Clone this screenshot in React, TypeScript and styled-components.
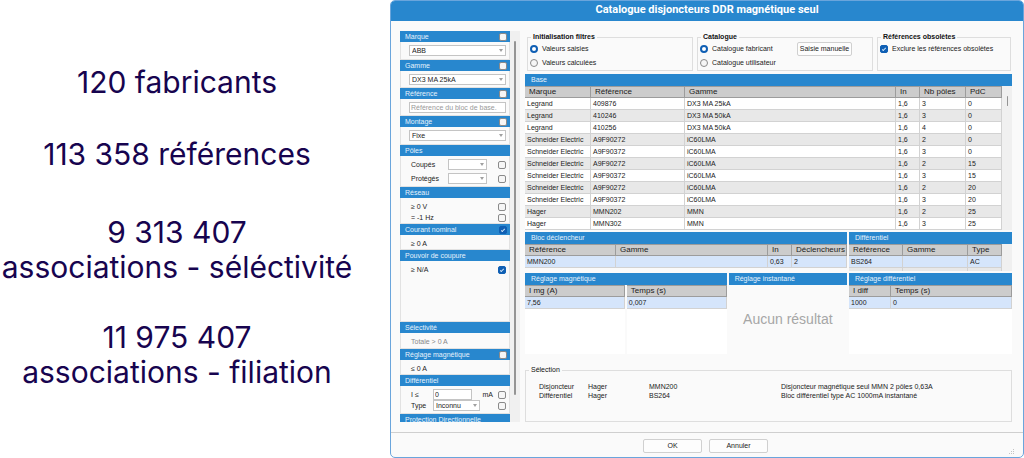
import React, { useId, useState } from "react";
import styled, { createGlobalStyle } from "styled-components";

const blue = "#2887ce";
const regular = '"Liberation Sans", Arial, sans-serif';

const GlobalStyle = createGlobalStyle`
  *, *::before, *::after { box-sizing: border-box; }
  body { margin: 0; background: #fff; }
  button, input, select { font: inherit; color: inherit; margin: 0; }
`;

const Page = styled.main`
  display: grid;
  grid-template-columns: minmax(354px, 354fr) 634fr;
  column-gap: 36px;
`;

/* ---------- figures ---------- */

const Figures = styled.section`
  display: flex;
  flex-direction: column;
  align-items: center;
  padding-top: 65px;
  color: #17044f;
  font-family: Inter, "Liberation Sans", sans-serif;
  font-size: 30px;
  line-height: 35px;
  text-align: center;
`;

const Figure = styled.p<{ $gap: number }>`
  margin: 0 0 ${(p) => p.$gap}px;
  white-space: nowrap;
`;

/* ---------- window ---------- */

const Dialog = styled.section`
  display: flex;
  flex-direction: column;
  min-width: 0;
  border: 1px solid #6aa5dc;
  border-radius: 5px;
  overflow: hidden;
  background: #fafafa;
  color: #222;
  font-family: ${regular};
  font-size: 7px;
  line-height: 10px;
`;

const TitleBar = styled.h1`
  margin: 0;
  height: 20px;
  background: ${blue};
  color: #fff;
  font: bold 11px/18px Roboto, ${regular};
  text-align: center;
`;

const Body = styled.div`
  display: grid;
  grid-template-columns: 120px 1fr;
  column-gap: 5px;
  padding: 10px 11px 10px 9px;
`;

const SidebarFrame = styled.aside`
  display: grid;
  grid-template-columns: 1fr 10px;
  height: 391px;
  overflow: hidden;
`;

const Sections = styled.div`
  overflow: hidden;
`;

const Track = styled.div`
  display: flex;
  justify-content: center;
  padding-top: 10px;
  background: #f0f0f0;
`;

const Thumb = styled.div<{ $length: number; $width: number }>`
  width: ${(p) => p.$width}px;
  height: ${(p) => p.$length}px;
  border-radius: 1px;
  background: #949494;
`;

const SectionHead = styled.header`
  display: flex;
  align-items: center;
  justify-content: space-between;
  height: 11px;
  padding: 0 3px 0 5px;
  background: ${blue};
  color: #e6f2fc;
`;

const SectionTitle = styled.h2`
  margin: 0;
  font: inherit;
`;

const SectionBody = styled.div<{ $height: number }>`
  display: flex;
  flex-direction: column;
  gap: 3px;
  height: ${(p) => p.$height}px;
  padding: 3px 3px 0 8px;
  border: solid #e2e2e2;
  border-width: 0 1px 1px;
`;

const Line = styled.div<{ $muted?: boolean }>`
  display: flex;
  align-items: center;
  min-height: 11px;
  padding-left: 2px;
  color: ${(p) => (p.$muted ? "#888" : "inherit")};
`;

const TightLines = styled.div`
  display: flex;
  flex-direction: column;
`;

const LineLabel = styled.label<{ $width: number }>`
  flex: 0 0 ${(p) => p.$width}px;
`;

const Unit = styled.span`
  margin-left: auto;
  padding-right: 5px;
`;

const PushRight = styled.span`
  display: flex;
  margin-left: auto;
`;

const Tick = styled.input`
  appearance: none;
  display: grid;
  place-items: center;
  width: 8px;
  height: 8px;
  border: 1px solid #8a8a8a;
  border-radius: 2px;
  background: #f6f6f6;
  &:checked {
    border-color: #0f5fb4;
    background: #0f5fb4;
  }
  &:checked::after {
    content: "";
    width: 4px;
    height: 2px;
    border: solid #cfe3f7;
    border-width: 0 0 1px 1px;
    transform: rotate(-45deg);
  }
`;

const Radio = styled.input`
  appearance: none;
  width: 8px;
  height: 8px;
  border: 1px solid #8a8a8a;
  border-radius: 50%;
  background: #f6f6f6;
  &:checked {
    border: 2px solid #0f5fb4;
    background: #fff;
  }
`;

const TextBox = styled.input<{ $width?: number }>`
  width: ${(p) => (p.$width ? `${p.$width}px` : "100%")};
  height: 11px;
  padding: 0 1px;
  border: 1px solid #c4c4c4;
  background: #fff;
  &::placeholder { color: #999; }
`;

const SelectFrame = styled.span<{ $width?: number }>`
  position: relative;
  display: flex;
  width: ${(p) => (p.$width ? `${p.$width}px` : "100%")};
`;

const SelectBox = styled.select`
  appearance: none;
  width: 100%;
  height: 11px;
  padding: 0 2px;
  border: 1px solid #c4c4c4;
  border-radius: 0;
  background: #fff;
`;

const Arrow = styled.svg`
  position: absolute;
  right: 3px;
  top: 4px;
  width: 4px;
  height: 3px;
  fill: #a0a0a0;
  pointer-events: none;
`;

function Select({ label, value, width, id }: { label: string; value: string; width?: number; id?: string }) {
  return (
    <SelectFrame $width={width}>
      <SelectBox id={id} aria-label={label} defaultValue={value}>
        <option value={value}>{value}</option>
      </SelectBox>
      <Arrow viewBox="0 0 4 3"><path d="M0 0h4L2 3z" /></Arrow>
    </SelectFrame>
  );
}

interface SectionProps {
  title: string;
  height: number;
  tick?: "on" | "off";
  children?: React.ReactNode;
}

function Section({ title, height, tick, children }: SectionProps) {
  return (
    <section>
      <SectionHead>
        <SectionTitle>{title}</SectionTitle>
        {tick && <Tick type="checkbox" aria-label={title} defaultChecked={tick === "on"} />}
      </SectionHead>
      <SectionBody $height={height}>{children}</SectionBody>
    </section>
  );
}

function Sidebar() {
  const id = useId();
  return (
    <SidebarFrame>
      <Sections>
        <Section title="Marque" height={18} tick="off"><Select label="Marque" value="ABB" /></Section>
        <Section title="Gamme" height={17} tick="off"><Select label="Gamme" value="DX3 MA 25kA" /></Section>
        <Section title="Référence" height={17} tick="off">
          <TextBox aria-label="Référence" placeholder="Référence du bloc de base." />
        </Section>
        <Section title="Montage" height={18} tick="off"><Select label="Montage" value="Fixe" /></Section>
        <Section title="Pôles" height={31}>
          {["Coupés", "Protégés"].map((name) => (
            <Line key={name}>
              <LineLabel $width={37} htmlFor={id + name}>{name}</LineLabel>
              <Select id={id + name} label={name} value="" width={39} />
              <PushRight><Tick type="checkbox" aria-label={"Filtrer " + name} /></PushRight>
            </Line>
          ))}
        </Section>
        <Section title="Réseau" height={26}>
          <TightLines>
            {["≥ 0 V", "= -1 Hz"].map((name) => (
              <Line as="label" key={name}>
                {name}
                <PushRight><Tick type="checkbox" /></PushRight>
              </Line>
            ))}
          </TightLines>
        </Section>
        <Section title="Courant nominal" height={15} tick="on"><Line>≥ 0 A</Line></Section>
        <Section title="Pouvoir de coupure" height={61}>
          <Line as="label">
            ≥ N/A
            <PushRight><Tick type="checkbox" defaultChecked /></PushRight>
          </Line>
        </Section>
        <Section title="Sélectivité" height={16}><Line $muted>Totale &gt; 0 A</Line></Section>
        <Section title="Réglage magnétique" height={15} tick="off"><Line>≤ 0 A</Line></Section>
        <Section title="Différentiel" height={28}>
          <TightLines>
            <Line>
              <LineLabel $width={22} htmlFor={id + "i"}>I ≤</LineLabel>
              <TextBox id={id + "i"} defaultValue="0" $width={39} />
              <Unit>mA</Unit>
              <Tick type="checkbox" aria-label="Filtrer I" />
            </Line>
            <Line>
              <LineLabel $width={22} htmlFor={id + "t"}>Type</LineLabel>
              <Select id={id + "t"} label="Type" value="Inconnu" width={47} />
              <PushRight><Tick type="checkbox" aria-label="Filtrer Type" /></PushRight>
            </Line>
          </TightLines>
        </Section>
        <Section title="Protection Directionnelle" height={15} />
      </Sections>
      <Track><Thumb $width={2} $length={354} /></Track>
    </SidebarFrame>
  );
}

/* ---------- options ---------- */

const Content = styled.div`
  display: flex;
  flex-direction: column;
  min-width: 0;
`;

const Options = styled.div`
  display: grid;
  grid-template-columns: 166fr 176fr 134fr;
  column-gap: 4px;
  height: 43px;
  padding: 1px 1px 3px 2px;
`;

const Group = styled.fieldset`
  display: flex;
  min-width: 0;
  margin: 0;
  padding: 0 20px 0 2px;
  border: 1px solid #dedede;
`;

const Legend = styled.legend<{ $bold?: boolean }>`
  margin-left: 1px;
  padding: 0 2px;
  color: #111;
  font-weight: ${(p) => (p.$bold ? "bold" : "normal")};
`;

const Choices = styled.div`
  display: flex;
  flex: 1;
  flex-direction: column;
  gap: 4px;
  padding-top: 2px;
`;

const Choice = styled.label`
  display: flex;
  align-items: center;
  gap: 4px;
  white-space: nowrap;
`;

const Button = styled.button<{ $width: number }>`
  flex: none;
  width: ${(p) => p.$width}px;
  height: 14px;
  padding: 0;
  border: 1px solid #d0d0d0;
  border-radius: 2px;
  background: #fdfdfd;
  line-height: 12px;
  white-space: nowrap;
`;

function RadioGroup({ name, options }: { name: string; options: string[] }) {
  const [picked, setPicked] = useState(options[0]);
  return (
    <Choices>
      {options.map((option) => (
        <Choice key={option}>
          <Radio type="radio" name={name} checked={picked === option} onChange={() => setPicked(option)} />
          {option}
        </Choice>
      ))}
    </Choices>
  );
}

/* ---------- tables ---------- */

const PanelTitle = styled.h2`
  margin: 0;
  height: 12px;
  padding-left: 6px;
  background: ${blue};
  color: #e6f2fc;
  font: inherit;
  line-height: 12px;
`;

const Scrollable = styled.div<{ $height: number }>`
  display: grid;
  grid-template-columns: 1fr 10px;
  height: ${(p) => p.$height}px;
  overflow: hidden;
`;

const Table = styled.table`
  width: 100%;
  table-layout: fixed;
  border-collapse: separate;
  border-spacing: 0;
  align-self: start;
`;

const HeadCell = styled.th`
  height: 12px;
  padding: 0 0 0 4px;
  border: solid #9c9c9c;
  border-width: 1px 1px 1px 0;
  background: #ccc;
  font-size: 8px;
  font-weight: normal;
  line-height: 10px;
  text-align: left;
  white-space: nowrap;
`;

const Row = styled.tr<{ $tone: "plain" | "alt" | "selected" }>`
  background: ${(p) => ({ plain: "#fff", alt: "#e8e8e8", selected: "#d5e5fb" })[p.$tone]};
`;

const Cell = styled.td`
  height: 12px;
  padding: 1px 0 0 2px;
  border: solid #d2d2d2;
  border-width: 0 1px 1px 0;
  white-space: nowrap;
`;

interface GridProps {
  columns: [string, number?][];
  rows: string[][];
  selected?: boolean;
}

function Grid({ columns, rows, selected }: GridProps) {
  return (
    <Table>
      <colgroup>
        {columns.map(([name, width]) => <col key={name} width={width} />)}
      </colgroup>
      <thead>
        <tr>{columns.map(([name]) => <HeadCell key={name} scope="col">{name}</HeadCell>)}</tr>
      </thead>
      <tbody>
        {rows.map((row, r) => (
          <Row key={r} $tone={selected && r === 0 ? "selected" : r % 2 ? "alt" : "plain"}>
            {row.map((text, c) => <Cell key={c}>{text}</Cell>)}
          </Row>
        ))}
      </tbody>
    </Table>
  );
}

const PanelRow = styled.div`
  display: grid;
  grid-template-columns: 322fr 163px;
  column-gap: 2px;
  margin-top: 2px;
`;

const SettingRow = styled.div`
  display: grid;
  grid-template-columns: 201fr 118fr 163px;
  column-gap: 2px;
  margin-top: 2px;
`;

const SplitArea = styled.div<{ $columns: number }>`
  display: grid;
  grid-template-columns: repeat(${(p) => p.$columns}, 1fr);
  column-gap: 2px;
  height: 69px;
`;

const Sheet = styled.div`
  background: #fff;
`;

const Empty = styled.p`
  margin: 0;
  height: 69px;
  color: #a6a6a6;
  font: 14px/69px ${regular};
  text-align: center;
  white-space: nowrap;
`;

const baseRows = [
  ["Legrand", "409876", "DX3 MA 25kA", "1,6", "3", "0"],
  ["Legrand", "410246", "DX3 MA 50kA", "1,6", "3", "0"],
  ["Legrand", "410256", "DX3 MA 50kA", "1,6", "4", "0"],
  ["Schneider Electric", "A9F90272", "iC60LMA", "1,6", "2", "0"],
  ["Schneider Electric", "A9F90372", "iC60LMA", "1,6", "3", "0"],
  ["Schneider Electric", "A9F90272", "iC60LMA", "1,6", "2", "15"],
  ["Schneider Electric", "A9F90372", "iC60LMA", "1,6", "3", "15"],
  ["Schneider Electric", "A9F90272", "iC60LMA", "1,6", "2", "20"],
  ["Schneider Electric", "A9F90372", "iC60LMA", "1,6", "3", "20"],
  ["Hager", "MMN202", "MMN", "1,6", "2", "25"],
  ["Hager", "MMN302", "MMN", "1,6", "3", "25"],
];

/* ---------- selection and footer ---------- */

const Summary = styled.fieldset`
  height: 57px;
  margin: 11px 0 0;
  padding: 7px 0 0 13px;
  border: 1px solid #dedede;
`;

const SummaryLegend = styled(Legend)`
  margin-left: -10px;
`;

const SummaryLine = styled.div`
  display: grid;
  grid-template-columns: 49px 61px 132px 1fr;
  line-height: 9px;
`;

const Footer = styled.footer`
  display: grid;
  grid-template-columns: 1fr auto 1fr;
  align-items: start;
  height: 25px;
  padding: 6px 8px 0 5px;
  border-top: 1px solid #cfcfcf;
`;

const Buttons = styled.div`
  grid-column: 2;
  display: flex;
  gap: 7px;
`;

const Grip = styled.svg`
  align-self: end;
  justify-self: end;
  width: 6px;
  height: 6px;
  margin-bottom: 2px;
  fill: #c4c4c4;
`;

export default function App() {
  return (
    <>
      <GlobalStyle />
      <Page>
        <Figures>
          <Figure $gap={37}>120 fabricants</Figure>
          <Figure $gap={43}>113 358 références</Figure>
          <Figure $gap={35}>9 313 407<br />associations - séléctivité</Figure>
          <Figure $gap={0}>11 975 407<br />associations - filiation</Figure>
        </Figures>
        <Dialog aria-label="Catalogue">
          <TitleBar>Catalogue disjoncteurs DDR magnétique seul</TitleBar>
          <Body>
            <Sidebar />
            <Content>
              <Options>
                <Group>
                  <Legend $bold>Initialisation filtres</Legend>
                  <RadioGroup name="filtres" options={["Valeurs saisies", "Valeurs calculées"]} />
                </Group>
                <Group>
                  <Legend $bold>Catalogue</Legend>
                  <RadioGroup name="catalogue" options={["Catalogue fabricant", "Catalogue utilisateur"]} />
                  <Button type="button" $width={55}>Saisie manuelle</Button>
                </Group>
                <Group>
                  <Legend $bold>Références obsolètes</Legend>
                  <Choices>
                    <Choice><Tick type="checkbox" defaultChecked />Exclure les références obsolètes</Choice>
                  </Choices>
                </Group>
              </Options>
              <PanelTitle>Base</PanelTitle>
              <Scrollable $height={144}>
                <Grid
                  columns={[["Marque", 66], ["Référence", 94], ["Gamme"], ["In", 24], ["Nb pôles", 46], ["PdC", 36]]}
                  rows={baseRows}
                />
                <Track><Thumb $width={1} $length={10} /></Track>
              </Scrollable>
              <PanelRow>
                <div>
                  <PanelTitle>Bloc déclencheur</PanelTitle>
                  <Grid
                    selected
                    columns={[["Référence", 91], ["Gamme"], ["In", 24], ["Déclencheurs", 55]]}
                    rows={[["MMN200", "", "0,63", "2"]]}
                  />
                </div>
                <div>
                  <PanelTitle>Différentiel</PanelTitle>
                  <Scrollable $height={27}>
                    <Grid
                      selected
                      columns={[["Référence", 54], ["Gamme"], ["Type", 34]]}
                      rows={[["BS264", "", "AC"], ["", "", ""]]}
                    />
                    <Track />
                  </Scrollable>
                </div>
              </PanelRow>
              <SettingRow>
                <div>
                  <PanelTitle>Réglage magnétique</PanelTitle>
                  <SplitArea $columns={2}>
                    <Sheet><Grid selected columns={[["I mg (A)"]]} rows={[["7,56"]]} /></Sheet>
                    <Sheet><Grid selected columns={[["Temps (s)"]]} rows={[["0,007"]]} /></Sheet>
                  </SplitArea>
                </div>
                <div>
                  <PanelTitle>Réglage instantané</PanelTitle>
                  <Empty>Aucun résultat</Empty>
                </div>
                <div>
                  <PanelTitle>Réglage différentiel</PanelTitle>
                  <SplitArea $columns={1}>
                    <Sheet>
                      <Grid selected columns={[["I diff", 42], ["Temps (s)"]]} rows={[["1000", "0"]]} />
                    </Sheet>
                  </SplitArea>
                </div>
              </SettingRow>
              <Summary>
                <SummaryLegend>Sélection</SummaryLegend>
                <SummaryLine>
                  <span>Disjoncteur</span><span>Hager</span><span>MMN200</span>
                  <span>Disjoncteur magnétique seul MMN 2 pôles 0,63A</span>
                </SummaryLine>
                <SummaryLine>
                  <span>Différentiel</span><span>Hager</span><span>BS264</span>
                  <span>Bloc différentiel type AC 1000mA instantané</span>
                </SummaryLine>
              </Summary>
            </Content>
          </Body>
          <Footer>
            <Buttons>
              <Button type="button" $width={59}>OK</Button>
              <Button type="button" $width={59}>Annuler</Button>
            </Buttons>
            <Grip viewBox="0 0 6 6">
              <path d="M4 0h1v1H4zM2 2h1v1H2zM4 2h1v1H4zM0 4h1v1H0zM2 4h1v1H2zM4 4h1v1H4z" />
            </Grip>
          </Footer>
        </Dialog>
      </Page>
    </>
  );
}
